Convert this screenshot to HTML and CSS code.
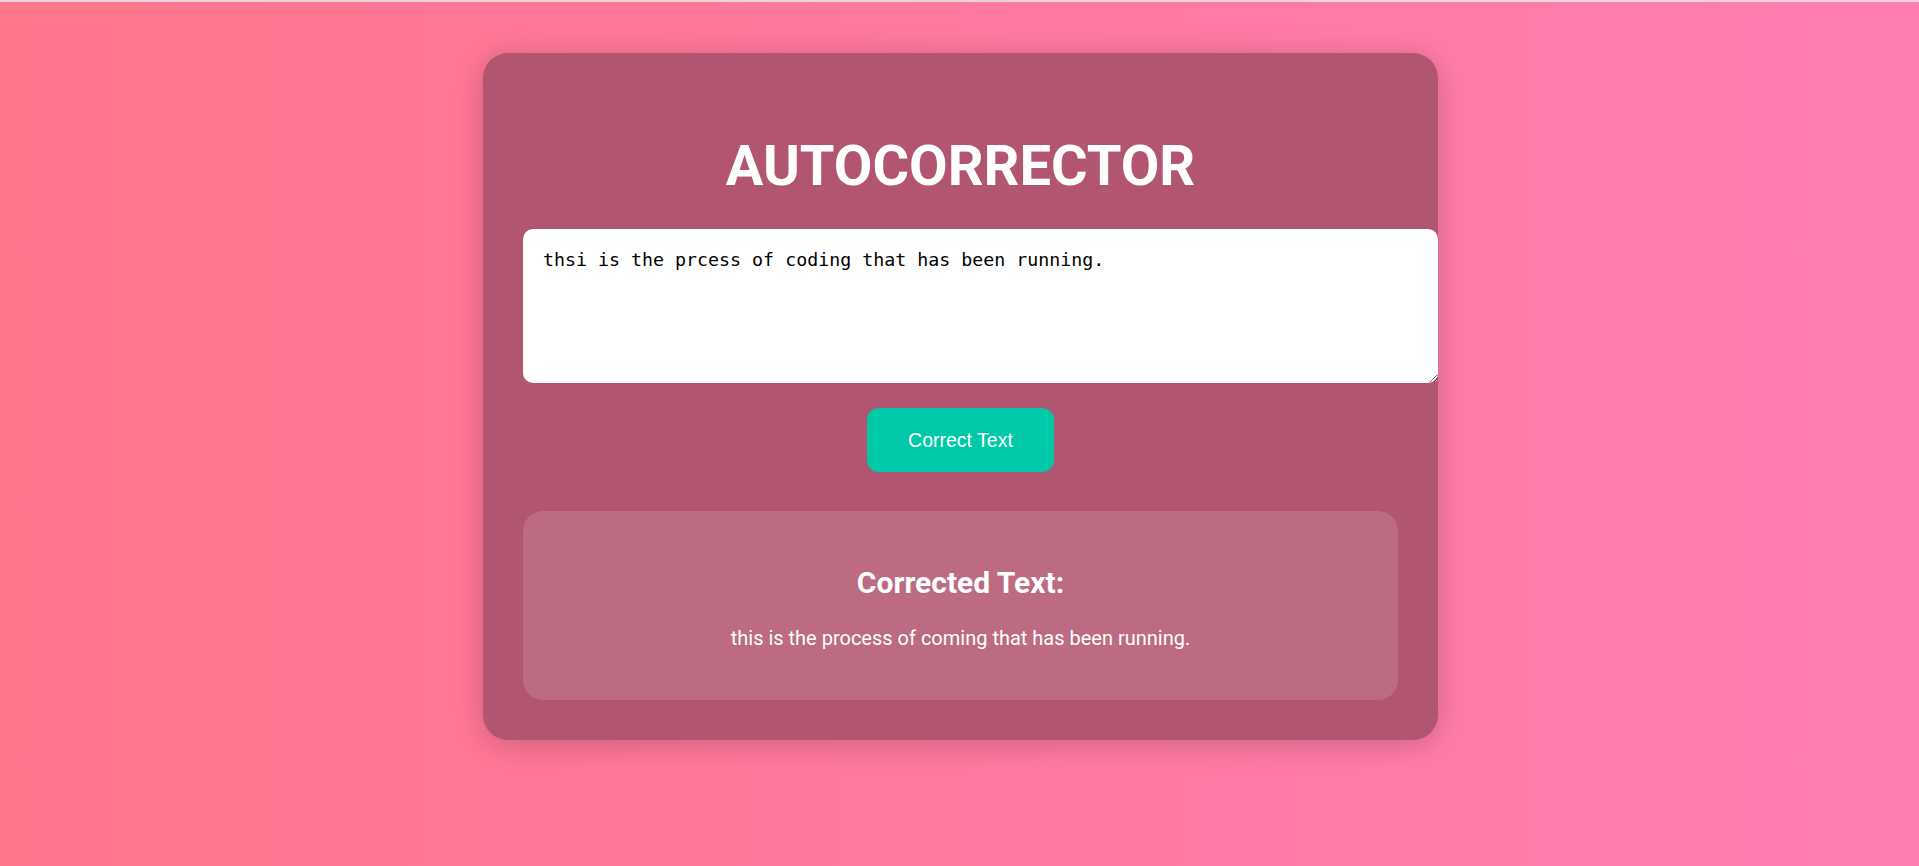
FILE: index.html
```html
<!DOCTYPE html>
<html lang="en">
<head>
<meta charset="utf-8">
<title>Autocorrector</title>
<link rel="stylesheet" href="styles.css">
</head>
<body>
  <main class="card">
    <h1 class="title">AUTOCORRECTOR</h1>
    <textarea class="input" spellcheck="false">thsi is the prcess of coding that has been running.</textarea>
    <div class="actions">
      <button class="btn" type="button">Correct Text</button>
    </div>
    <section class="result">
      <h3 class="result-title">Corrected Text:</h3>
      <p class="result-text">this is the process of coming that has been running.</p>
    </section>
  </main>
</body>
</html>
```
FILE: styles.css
```css
html, body {
  height: 100%;
}
body {
  margin: 0;
  border-top: 2px solid #efd2d9;
  padding: 51px 0 0 2px;
  box-sizing: border-box;
  background: linear-gradient(to right, #ff758c, #ff7eb3);
  font-family: Roboto, "Liberation Sans", sans-serif;
  color: #fff;
}
.card {
  width: 875px;
  margin: 0 auto;
  padding: 40px;
  background: #b15570;
  border-radius: 25px;
  box-shadow: 0 4px 30px rgba(0, 0, 0, 0.2);
  text-align: center;
}
.title {
  margin: 40px 0 30px;
  font-size: 56px;
  font-weight: 700;
  line-height: normal;
}
.input {
  display: block;
  width: 100%;
  height: 114px;
  padding: 20px;
  border: none;
  border-radius: 10px;
  background: #fff;
  color: #000;
  font-family: "DejaVu Sans Mono", monospace;
  font-size: 18.3px;
  line-height: normal;
  text-align: left;
  outline: none;
}
.actions {
  display: flex;
  justify-content: center;
  margin-top: 25px;
}
.btn {
  height: 64px;
  padding: 0 41px;
  border: none;
  border-radius: 12px;
  background: #00c9a7;
  color: #fff;
  font-family: "Liberation Sans", Arial, sans-serif;
  font-size: 19.5px;
  cursor: pointer;
}
.result {
  margin-top: 39px;
  padding: 30px;
  background: #bc6b82;
  border-radius: 20px;
}
.result-title {
  margin: 24px 0 26px;
  font-size: 30px;
  font-weight: 700;
  line-height: normal;
}
.result-text {
  margin: 0 0 20px;
  font-size: 20px;
  line-height: normal;
}
```
